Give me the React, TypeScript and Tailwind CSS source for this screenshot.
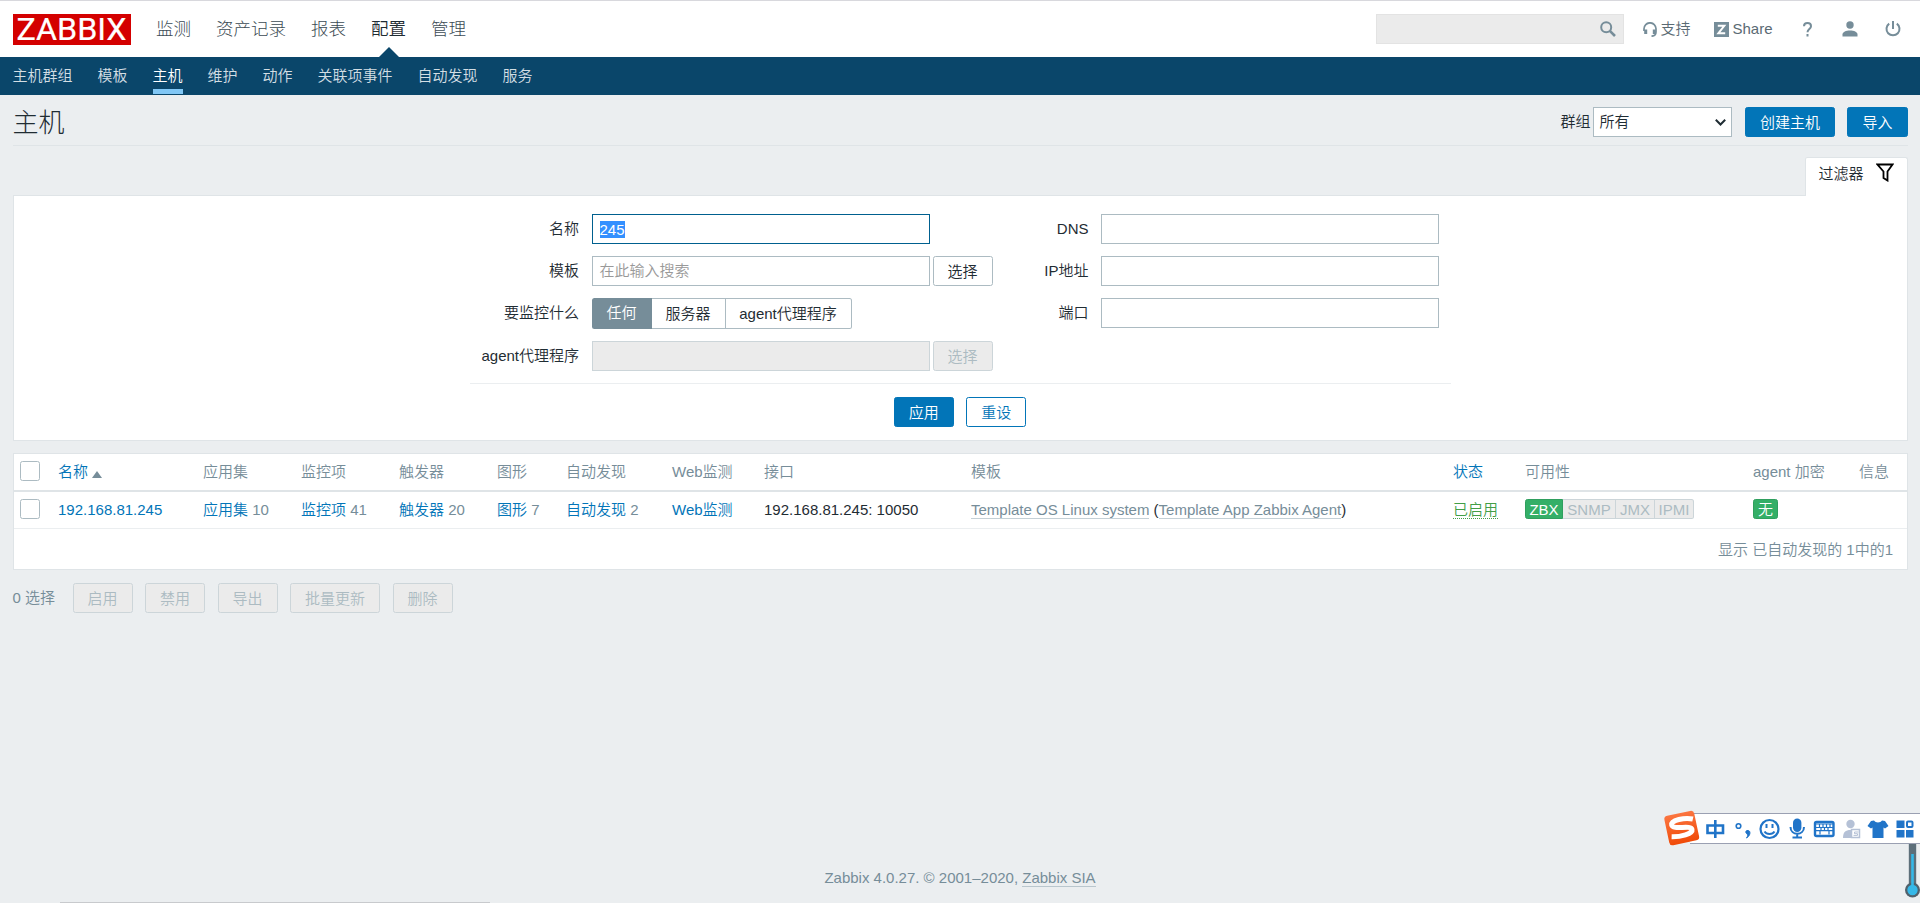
import type { ReactNode } from 'react';

const topMenu = ['监测', '资产记录', '报表', '配置', '管理'];
const subMenu = ['主机群组', '模板', '主机', '维护', '动作', '关联项事件', '自动发现', '服务'];
const massActions = ['启用', '禁用', '导出', '批量更新', '删除'];

const columns = [
  { title: '名称', width: 'w-[145px]', sortable: true, sorted: true },
  { title: '应用集', width: 'w-[98px]' },
  { title: '监控项', width: 'w-[98px]' },
  { title: '触发器', width: 'w-[98px]' },
  { title: '图形', width: 'w-[69px]' },
  { title: '自动发现', width: 'w-[106px]' },
  { title: 'Web监测', width: 'w-[92px]' },
  { title: '接口', width: 'w-[207px]' },
  { title: '模板', width: 'w-[482px]' },
  { title: '状态', width: 'w-[72px]', sortable: true },
  { title: '可用性', width: 'w-[228px]' },
  { title: 'agent 加密', width: 'w-[106px]' },
  { title: '信息', width: 'w-[48px]' },
];

function Logo() {
  return (
    <svg width="118" height="31" viewBox="0 0 118 31" className="block overflow-visible">
      <path d="M0 0h118v31H0z" fill="#d40000" />
      <text x="3.5" y="26" fontSize="31" fontWeight="400" fill="#fff" stroke="#fff" strokeWidth="0.2" textLength="110" lengthAdjust="spacingAndGlyphs" fontFamily="Roboto, sans-serif">
        ZABBIX
      </text>
    </svg>
  );
}

function SearchIcon() {
  return (
    <svg width="16" height="16" viewBox="0 0 16 16" fill="none" stroke="#768d99">
      <circle cx="6.2" cy="6.2" r="5" strokeWidth="2" />
      <path d="M9.8 9.8l5.2 5.2" strokeWidth="2.6" />
    </svg>
  );
}

function HeadsetIcon() {
  return (
    <svg width="14" height="15" viewBox="0 0 14 15" fill="none" stroke="#768d99">
      <path d="M1 9V6.800A6 6 0 0 1 13 6.800V10c0 2.200-1.500 4-4.500 4.200" strokeWidth="1.700" />
      <path d="M2.700 7.500v4.500M11.300 7.500v4.500" strokeWidth="3" />
    </svg>
  );
}

function UserIcon() {
  return (
    <svg width="16" height="16" viewBox="0 0 16 16" fill="#768d99">
      <circle cx="8" cy="4" r="3.7" />
      <path d="M0.5 15.500v-2C0.500 11 4 9.500 8 9.500s7.500 1.500 7.500 4v2z" />
    </svg>
  );
}

function PowerIcon() {
  return (
    <svg width="16" height="16" viewBox="0 0 16 16" fill="none" stroke="#768d99" strokeWidth="2">
      <path d="M4.2 2.600a6.500 6.500 0 1 0 7.600 0" />
      <path d="M8 0v8" />
    </svg>
  );
}

function Header() {
  return (
    <header>
      <div className="flex h-[57px] items-start border-t border-[#d8d8dd] bg-white px-[12.5px] pt-[13px]">
        <Logo />
        <nav className="ml-[13px] flex text-[17.5px] leading-[30px] font-light text-[#3c4b54]">
          {topMenu.map((item) => (
            <a key={item} className={`relative h-[43px] px-[12.5px] ${item === '配置' ? 'font-[350] text-[#1f2c33]' : ''}`}>
              {item}
              {item === '配置' && (
                <svg className="absolute bottom-0 left-[20px]" width="20" height="10" viewBox="0 0 20 10">
                  <path d="M0 10L10 0l10 10z" fill="#0a466a" />
                </svg>
              )}
            </a>
          ))}
        </nav>
        <div className="ml-auto flex h-[30px] items-center text-[#5a6a73]">
          <div className="flex h-[30px] w-[248px] items-center justify-end border border-[#e3e3e3] bg-[#ebebeb] pr-[7px]">
            <SearchIcon />
          </div>
          <a className="ml-[18.5px] flex items-center gap-[3.5px]"><HeadsetIcon />支持</a>
          <a className="ml-[24px] flex items-center gap-[3px] font-normal">
            <svg width="15" height="15" viewBox="0 0 15 15">
              <path d="M0 0h15v15H0z" fill="#768d99" />
              <path d="M3.800 3.800h6.500L4.400 11.200h6.800" fill="none" stroke="#fff" strokeWidth="2" />
            </svg>
            Share
          </a>
          <svg className="ml-[30px]" width="9" height="15" viewBox="0 0 9 15" fill="none" stroke="#768d99" strokeWidth="2">
            <path d="M1 4.200C1 2 2.500 1 4.500 1S8 2 8 4.200c0 2.600-3.500 3-3.500 6M4.500 12v2.500" />
          </svg>
          <div className="mr-[27px] ml-[30px]"><UserIcon /></div>
          <div className="mr-[7px]"><PowerIcon /></div>
        </div>
      </div>
      <nav className="flex h-[38px] gap-[25px] bg-[#0a466a] px-[12.5px] text-[#d3dee4]">
        {subMenu.map((item) => (
          <a key={item} className={`h-[37px] leading-[37px] ${item === '主机' ? 'border-b-[5px] border-[#81c7f5] text-white' : ''}`}>
            {item}
          </a>
        ))}
      </nav>
    </header>
  );
}

type ButtonProps = { children: ReactNode; kind?: 'primary' | 'outline' | 'grey' | 'disabled' };

function Button({ children, kind = 'primary' }: ButtonProps) {
  const styles = {
    primary: 'border-[#0275b8] bg-[#0275b8] text-white',
    outline: 'border-[#0275b8] bg-white text-[#0275b8]',
    grey: 'border-[#acbbc2] bg-white text-[#1f2c33]',
    disabled: 'border-[#ccd5d9] bg-[#ebebeb] text-[#acbbc2]',
  };
  return (
    <button className={`h-[30px] shrink-0 rounded-[2.5px] border px-[14px] leading-[29px] whitespace-nowrap ${styles[kind]}`}>
      {children}
    </button>
  );
}

function Field({ label, labelWidth = 'w-[109.5px]', children }: { label: string; labelWidth?: string; children: ReactNode }) {
  return (
    <div className="flex gap-[12.5px]">
      <label className={`text-right leading-[29px] whitespace-nowrap ${labelWidth}`}>{label}</label>
      {children}
    </div>
  );
}

function TextBox({ className = 'border-[#acbbc2]', children }: { className?: string; children?: ReactNode }) {
  return <div className={`flex h-[30px] w-[338px] shrink-0 items-center border px-[7px] ${className}`}>{children}</div>;
}

function FilterPanel() {
  return (
    <section className="h-[246px] border border-[#dfe4e7] bg-white pt-[18px]">
      <div className="mx-auto flex w-[981px] justify-between border-b border-[#ebeef0] pr-[11.5px] pb-3">
        <div className="flex flex-col gap-3">
          <Field label="名称">
            <TextBox className="border-[#00608f]">
              <span className="bg-[#3390ff] leading-[17px] text-white">245</span>
            </TextBox>
          </Field>
          <Field label="模板">
            <div className="flex gap-[3px]">
              <TextBox><span className="text-[#999]">在此输入搜索</span></TextBox>
              <Button kind="grey">选择</Button>
            </div>
          </Field>
          <Field label="要监控什么">
            <div className="flex h-[31px] leading-[30px]">
              <span className="w-[60px] rounded-l-[2.5px] bg-[#768d99] text-center text-white">任何</span>
              <span className="w-[74px] border-y border-r border-[#acbbc2] text-center">服务器</span>
              <span className="w-[126px] rounded-r-[2.5px] border-y border-r border-[#acbbc2] text-center">agent代理程序</span>
            </div>
          </Field>
          <Field label="agent代理程序">
            <div className="flex gap-[3px]">
              <TextBox className="border-[#ccd5d9] bg-[#ebebeb]" />
              <Button kind="disabled">选择</Button>
            </div>
          </Field>
        </div>
        <div className="flex flex-col gap-3">
          <Field label="DNS" labelWidth="w-[60px]"><TextBox /></Field>
          <Field label="IP地址" labelWidth="w-[60px]"><TextBox /></Field>
          <Field label="端口" labelWidth="w-[60px]"><TextBox /></Field>
        </div>
      </div>
      <div className="mt-[13px] flex justify-center gap-[12.5px]">
        <Button>应用</Button>
        <Button kind="outline">重设</Button>
      </div>
    </section>
  );
}

function Checkbox() {
  return <span className="-mt-0.5 ml-[6.5px] block size-5 rounded-[2.5px] border border-[#acbbc2] bg-white" />;
}

function CountLink({ name, count }: { name: string; count?: number }) {
  return (
    <td>
      <a className="text-[#0275b8]">{name}</a>
      {count !== undefined && <span className="text-[#768d99]"> {count}</span>}
    </td>
  );
}

function HostTable() {
  return (
    <section className="mt-3 h-[117px] border border-[#dfe4e7] bg-white">
      <table className="w-full table-fixed border-separate border-spacing-0 text-left leading-5 whitespace-nowrap">
        <thead>
          <tr className="h-[38px] text-[#768d99] [&>th]:border-b-2 [&>th]:border-[#dfe4e7] [&>th]:p-0">
            <th className="w-[44.5px]"><Checkbox /></th>
            {columns.map((c) => (
              <th key={c.title} className={`font-[350] ${c.width} ${c.sortable ? 'text-[#0275b8]' : ''}`}>
                {c.title}
                {c.sorted && (
                  <svg className="ml-[4px] inline-block align-[-1px]" width="10" height="7" viewBox="0 0 10 7">
                    <path d="M0 7L5 0l5 7z" fill="#768d99" />
                  </svg>
                )}
              </th>
            ))}
          </tr>
        </thead>
        <tbody>
          <tr className="h-[37px] [&>td]:border-b [&>td]:border-[#ebeef0] [&>td]:p-0">
            <td><Checkbox /></td>
            <CountLink name="192.168.81.245" />
            <CountLink name="应用集" count={10} />
            <CountLink name="监控项" count={41} />
            <CountLink name="触发器" count={20} />
            <CountLink name="图形" count={7} />
            <CountLink name="自动发现" count={2} />
            <CountLink name="Web监测" />
            <td>192.168.81.245: 10050</td>
            <td>
              <a className="border-b border-[#c4d0d6] text-[#768d99]">Template OS Linux system</a>
              {' ('}
              <a className="border-b border-[#c4d0d6] text-[#768d99]">Template App Zabbix Agent</a>)
            </td>
            <td><a className="border-b border-dotted border-[#429e47] text-[#429e47]">已启用</a></td>
            <td>
              <div className="-mt-0.5 flex h-5 leading-[19px] text-[#acbbc2]">
                <span className="w-[38px] rounded-l-[2.5px] border border-[#2f9f5e] bg-[#34af67] text-center text-white">ZBX</span>
                <span className="w-[53px] border-y border-r border-[#ccd5d9] bg-[#ebebeb] text-center">SNMP</span>
                <span className="w-[39px] border-y border-r border-[#ccd5d9] bg-[#ebebeb] text-center">JMX</span>
                <span className="w-[39px] rounded-r-[2.5px] border-y border-r border-[#ccd5d9] bg-[#ebebeb] text-center">IPMI</span>
              </div>
            </td>
            <td>
              <span className="-mt-0.5 block h-5 w-[25px] rounded-[2.5px] border border-[#2f9f5e] bg-[#34af67] text-center leading-[19px] text-white">无</span>
            </td>
            <td />
          </tr>
        </tbody>
      </table>
      <div className="pr-[13.5px] text-right leading-[41px] text-[#768d99]">显示 已自动发现的 1中的1</div>
    </section>
  );
}

function SogouBar() {
  return (
    <div className="absolute top-[813px] right-0 h-[31px] w-[230px] border-y border-[#9aa0b2] bg-white">
      <svg className="absolute top-[-4px] left-[-27px]" width="257" height="36" viewBox="0 0 257 36" fill="none" stroke="#2074c8">
        <defs>
          <linearGradient id="sogou" x1="0" y1="0" x2="0" y2="1">
            <stop offset="0" stopColor="#fb7540" />
            <stop offset="1" stopColor="#f04a08" />
          </linearGradient>
        </defs>
        <g transform="rotate(-12 19 18)">
          <rect x="3.5" y="3" width="30.5" height="30" rx="3.5" fill="url(#sogou)" stroke="none" />
          <path d="M31.500 11.500C24 8 9.500 8 9.500 13c0 5.500 19 3.500 19 8.500 0 4.500-13 5-21.500 3" stroke="#fff" strokeWidth="5" />
        </g>
        {/* input mode */}
        <path d="M44.5 15.500h15.500v7.500H44.500zM52.300 10v18" strokeWidth="2.6" />
        {/* punctuation */}
        <circle cx="75.5" cy="16" r="2.3" strokeWidth="1.6" />
        <path d="M84 20.500c4-.8 4 5-.5 7.500 1.600-2.300 1.600-3.200 0-4.500-1-.9-1-2.600.5-3z" fill="#2074c8" />
        {/* emoji */}
        <circle cx="106.5" cy="19" r="9" strokeWidth="2.2" />
        <path d="M103.500 14v4M109.500 14v4M101.500 21.500c2 3.200 8 3.200 10 0" strokeWidth="2" />
        {/* voice */}
        <rect x="130" y="8.5" width="8.4" height="13.5" rx="4.2" fill="#2074c8" stroke="none" />
        <path d="M127.500 17c0 9 13.500 9 13.500 0M134.200 23.500v4M129.500 27.500h9.500" strokeWidth="2" />
        {/* keyboard */}
        <rect x="152" y="12" width="18.5" height="14" rx="1.5" strokeWidth="2.4" />
        <path d="M153 14h17M153 17.500h17M153 20.700h17M156.500 14v3.500M160 14v3.500M163.500 14v3.500M167 14v3.500M158 17.500v3.500M161.500 17.500v3.500M165 17.500v3.500M157 21v3.500M166 21v3.500" strokeWidth="1.2" />
        {/* account */}
        <g stroke="none" fill="#b5c1d6">
          <circle cx="187.5" cy="14" r="4.2" />
          <path d="M180 28c0-6 2.500-8 7.500-8h2v8z" />
        </g>
        <path d="M188.500 19.500h8v8h-8z" fill="#fff" stroke="#b5c1d6" strokeWidth="1.5" />
        <path d="M195.500 22h-4v1.700h3v1.700h-4" stroke="#b5c1d6" strokeWidth="1" />
        {/* skin */}
        <path d="M211 10.500c1.500 2.500 6.500 2.500 8 0l3 .5 3.500 5-3.500 2.500-1.500-1V28h-11V17.500l-1.500 1-3.500-2.500 3.500-5z" fill="#2074c8" stroke="none" />
        {/* toolbox */}
        <path d="M233.500 10.500h8v7.500h-8zM233.500 20h8v7.500h-8zM243 20h7.500v7.500H243z" fill="#2074c8" stroke="none" />
        <rect x="244" y="11.5" width="5.5" height="5.5" rx="1" strokeWidth="2" />
      </svg>
    </div>
  );
}

function Thermometer() {
  return (
    <svg className="absolute top-[843px] right-0" width="15" height="55" viewBox="0 0 15 55">
      <path d="M3.8 0h7.400v42H3.800z" fill="#5d6f7a" />
      <circle cx="7.5" cy="47" r="7.5" fill="#50616c" />
      <circle cx="7.5" cy="47" r="5.2" fill="#35b8e8" />
      <path d="M7.500 11v34" stroke="#35b8e8" strokeWidth="2.6" />
    </svg>
  );
}

export default function App() {
  return (
    <div className="relative flex h-[903px] w-full flex-col overflow-hidden bg-[#ebeef0] font-['Liberation_Sans','Noto_Sans_CJK_SC',sans-serif] text-[15px] font-[350] text-[#1f2c33]">
      <Header />
      <main className="px-[12.5px]">
        <div className="flex h-[51px] items-start border-b border-[#dfe4e7] pt-3">
          <h1 className="text-[26px] leading-[33px] font-light">主机</h1>
          <div className="ml-auto flex items-center">
            <span className="mr-[3px]">群组</span>
            <div className="mr-[12.5px] flex h-[30px] w-[139px] items-center justify-between border border-[#acbbc2] bg-white pr-[5px] pl-[5px]">
              所有
              <svg width="11" height="7" viewBox="0 0 11 7" fill="none" stroke="#1f2c33" strokeWidth="2">
                <path d="M0.8 0.800l4.700 4.700 4.700-4.700" />
              </svg>
            </div>
            <div className="flex gap-[12.5px]">
              <Button>创建主机</Button>
              <Button>导入</Button>
            </div>
          </div>
        </div>
        <div className="mt-[11px] flex justify-end">
          <div className="relative -mb-px flex h-[39px] w-[102.5px] items-start rounded-t-[2.5px] border border-b-0 border-[#dfe4e7] bg-white pt-[5px] pl-[12.5px] leading-[22px]">
            过滤器
            <svg className="ml-3" width="18" height="19" viewBox="0 0 18 19" fill="none" stroke="#000" strokeWidth="1.8">
              <path d="M1.5 1.500h15l-5 7v9l-4-2.500V8.500z" />
            </svg>
          </div>
        </div>
        <FilterPanel />
        <HostTable />
        <div className="mt-[13px] flex items-center gap-[12.5px]">
          <span className="mr-[5px] text-[#768d99]">0 选择</span>
          {massActions.map((action) => (
            <Button key={action} kind="disabled">{action}</Button>
          ))}
        </div>
      </main>
      <footer className="mt-auto pb-[14px] text-center leading-5 text-[#768d99]">
        Zabbix 4.0.27. © 2001–2020, <a className="border-b border-[#b9c6cd]">Zabbix SIA</a>
      </footer>
      <div className="ml-[60px] h-px w-[430px] bg-[#c8cacd]" />
      <Thermometer />
      <SogouBar />
    </div>
  );
}
